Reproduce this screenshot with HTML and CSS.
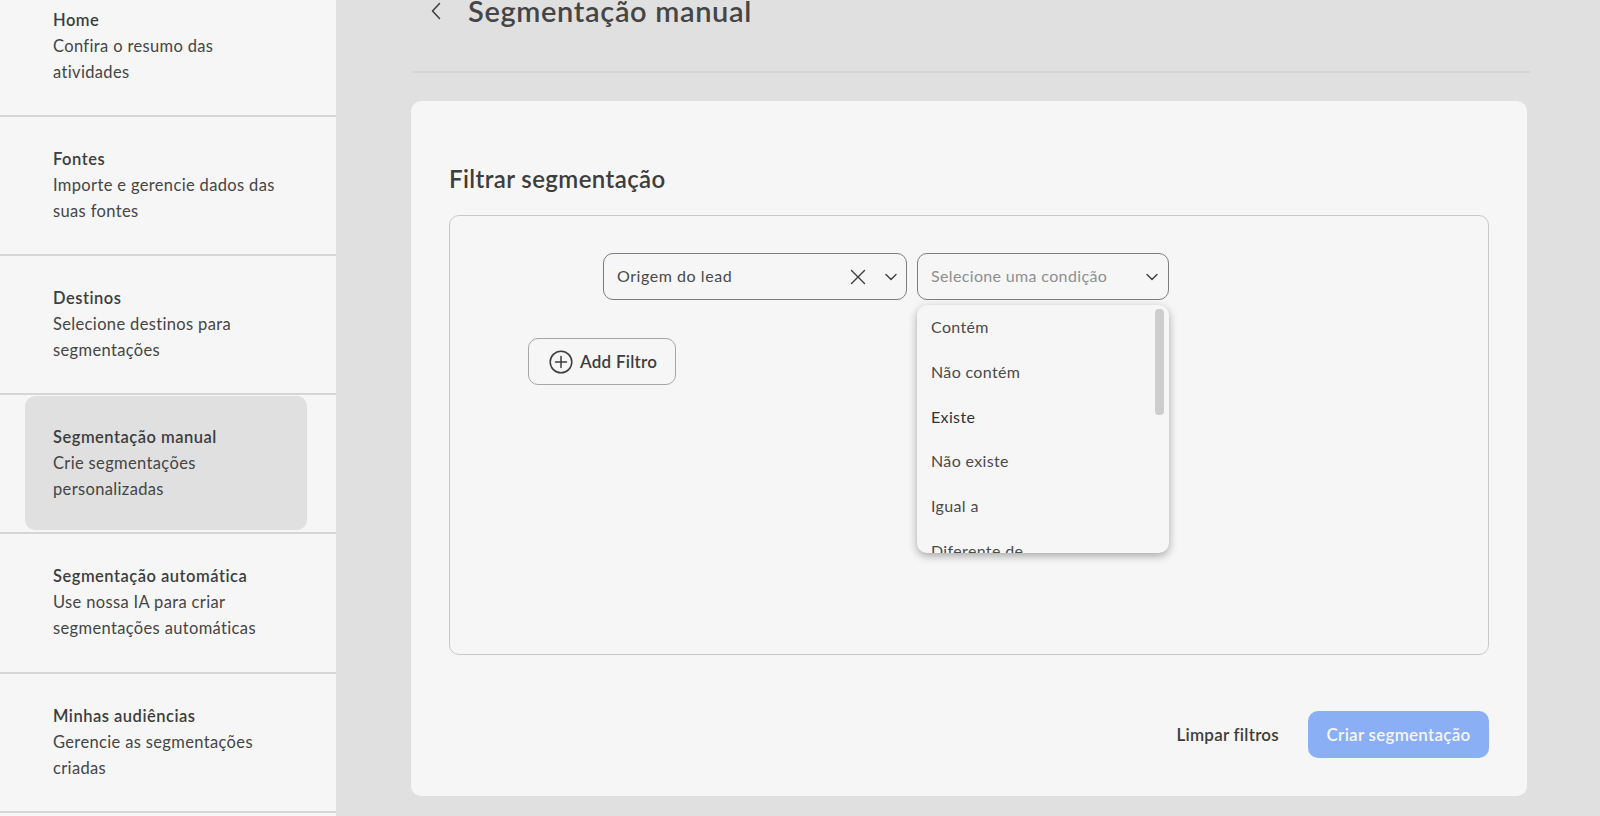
FILE: index.html
```html
<!DOCTYPE html>
<html lang="pt-BR">
<head>
<meta charset="utf-8">
<title>Segmentação manual</title>
<link rel="stylesheet" href="styles.css">
</head>
<body>
<div class="app">
  <nav class="sidebar">
    <a class="nav-item nav-first"><strong>Home</strong><span>Confira o resumo das<br>atividades</span></a>
    <a class="nav-item"><strong>Fontes</strong><span>Importe e gerencie dados das<br>suas fontes</span></a>
    <a class="nav-item"><strong>Destinos</strong><span>Selecione destinos para<br>segmentações</span></a>
    <a class="nav-item nav-active"><strong>Segmentação manual</strong><span>Crie segmentações<br>personalizadas</span></a>
    <a class="nav-item nav-tall"><strong>Segmentação automática</strong><span>Use nossa IA para criar<br>segmentações automáticas</span></a>
    <a class="nav-item"><strong>Minhas audiências</strong><span>Gerencie as segmentações<br>criadas</span></a>
  </nav>
  <main class="main">
    <header class="page-head">
      <svg class="back" width="12" height="18" viewBox="0 0 12 18" fill="none"><path d="M9.5 1.5 2.5 9l7 7.5" stroke="#3d3d3d" stroke-width="1.5" stroke-linecap="round" stroke-linejoin="round"/></svg>
      <h1>Segmentação manual</h1>
    </header>
    <section class="card">
      <h2>Filtrar segmentação</h2>
      <div class="panel">
        <div class="filter-row">
          <div class="select select-field">
            <span class="value">Origem do lead</span>
            <svg class="clear" width="16" height="16" viewBox="0 0 16 16" fill="none"><path d="M1.5 1.5l13 13M14.5 1.5l-13 13" stroke="#3d3d3d" stroke-width="1.4" stroke-linecap="round"/></svg>
            <svg class="chev" width="12" height="8" viewBox="0 0 12 8" fill="none"><path d="M1 1.5l5 5 5-5" stroke="#3d3d3d" stroke-width="1.4" stroke-linecap="round" stroke-linejoin="round"/></svg>
          </div>
          <div class="select select-cond">
            <span class="placeholder">Selecione uma condição</span>
            <svg class="chev" width="12" height="8" viewBox="0 0 12 8" fill="none"><path d="M1 1.5l5 5 5-5" stroke="#3d3d3d" stroke-width="1.4" stroke-linecap="round" stroke-linejoin="round"/></svg>
            <div class="menu">
              <ul>
                <li>Contém</li>
                <li>Não contém</li>
                <li class="hover">Existe</li>
                <li>Não existe</li>
                <li>Igual a</li>
                <li>Diferente de</li>
              </ul>
              <div class="thumb"></div>
            </div>
          </div>
        </div>
        <button class="add-btn">
          <svg width="24" height="24" viewBox="0 0 24 24" fill="none"><circle cx="12" cy="12" r="10.8" stroke="#3d3d3d" stroke-width="1.5"/><path d="M12 6.5v11M6.5 12h11" stroke="#3d3d3d" stroke-width="1.5" stroke-linecap="round"/></svg>
          <span>Add Filtro</span>
        </button>
      </div>
      <div class="actions">
        <button class="link-btn">Limpar filtros</button>
        <button class="primary-btn">Criar segmentação</button>
      </div>
    </section>
  </main>
</div>
</body>
</html>
```

FILE: styles.css
```css
* { box-sizing: border-box; }
html, body { margin: 0; height: 816px; overflow: hidden; }
body { font-family: "Lato", "Noto Sans", sans-serif; color: #3d3d3d; background: #e0e0e0; }
.app { display: grid; grid-template-columns: 336px 1fr; height: 816px; overflow: hidden; }

.sidebar { background: #f6f6f6; height: 816px; overflow: hidden; }
.nav-item { display: flex; flex-direction: column; height: 139px; padding: 29px 0 0 53px; font-size: 16.5px; line-height: 26px; border-bottom: 2px solid #d6d6d6; letter-spacing: .35px; }
.nav-item strong { font-weight: 600; letter-spacing: .5px; }
.nav-item span { color: #454545; }
.nav-first { height: 117px; padding-top: 7px; }
.nav-tall { height: 140px; }
.nav-active { position: relative; z-index: 0; }
.nav-active::before { content: ""; position: absolute; z-index: -1; left: 25px; top: 1px; width: 282px; height: 134px; background: #e0e0e0; border-radius: 10px; }

.main { padding: 0 70px 0 75px; }
.page-head { display: flex; align-items: center; height: 85px; margin-top: -12px; padding: 0 0 38px 19px; border-bottom: 2px solid #d6d6d6; }
.back { flex: none; }
.page-head h1 { margin: 0 0 0 26px; font-size: 29px; line-height: 40px; font-weight: 600; color: #454545; letter-spacing: .65px; }

.card { width: 1116px; height: 695px; margin-top: 28px; padding: 62px 38px 0; background: #f6f6f6; border-radius: 10px; }
.card h2 { margin: 0; font-size: 24px; line-height: 32px; font-weight: 600; color: #3d3d3d; letter-spacing: .4px; }

.panel { height: 440px; margin-top: 20px; padding: 37px 0 0 78px; border: 1px solid #c9c9c9; border-radius: 10px; }
.filter-row { display: flex; gap: 10px; margin-left: 75px; }
.select { position: relative; display: flex; align-items: center; height: 47px; padding: 0 9px 0 13px; border: 1px solid #7d7d7d; border-radius: 10px; font-size: 16px; letter-spacing: .35px; }
.select-field { width: 304px; }
.select-cond { width: 252px; padding-right: 10px; }
.value { flex: 1; color: #4a4a4a; margin-top: -2px; letter-spacing: .55px; }
.placeholder { flex: 1; color: #8f8f8f; margin-top: -2px; }
.clear { margin-right: 19px; }

.menu { position: absolute; left: -1px; top: 51px; width: 252px; height: 248px; background: #f6f6f6; border-radius: 10px; box-shadow: 0 3px 8px rgba(0,0,0,.32); overflow: hidden; }
.menu ul { list-style: none; margin: 0; padding: 0 0 0 14px; }
.menu li { height: 44.8px; line-height: 44px; color: #4a4a4a; }
.menu li.hover { color: #333; }
.thumb { position: absolute; right: 5px; top: 4px; width: 9px; height: 106px; background: #cdcdcd; border-radius: 4px; }

.add-btn { display: flex; align-items: center; gap: 7px; width: 148px; height: 47px; margin-top: 38px; padding: 0 0 0 20px; background: transparent; border: 1px solid #a6a6a6; border-radius: 10px; font: 600 17px "Lato", sans-serif; color: #3d3d3d; letter-spacing: .25px; }

.actions { display: flex; justify-content: flex-end; align-items: center; gap: 29px; margin-top: 56px; }
.link-btn { padding: 0; border: 0; background: none; font: 600 17px "Lato", sans-serif; color: #3d3d3d; letter-spacing: .25px; }
.primary-btn { width: 181px; height: 47px; padding: 0; border: 0; border-radius: 10px; background: #8aaff5; color: #f6f6f6; font: 600 17px "Lato", sans-serif; letter-spacing: .25px; }
```
